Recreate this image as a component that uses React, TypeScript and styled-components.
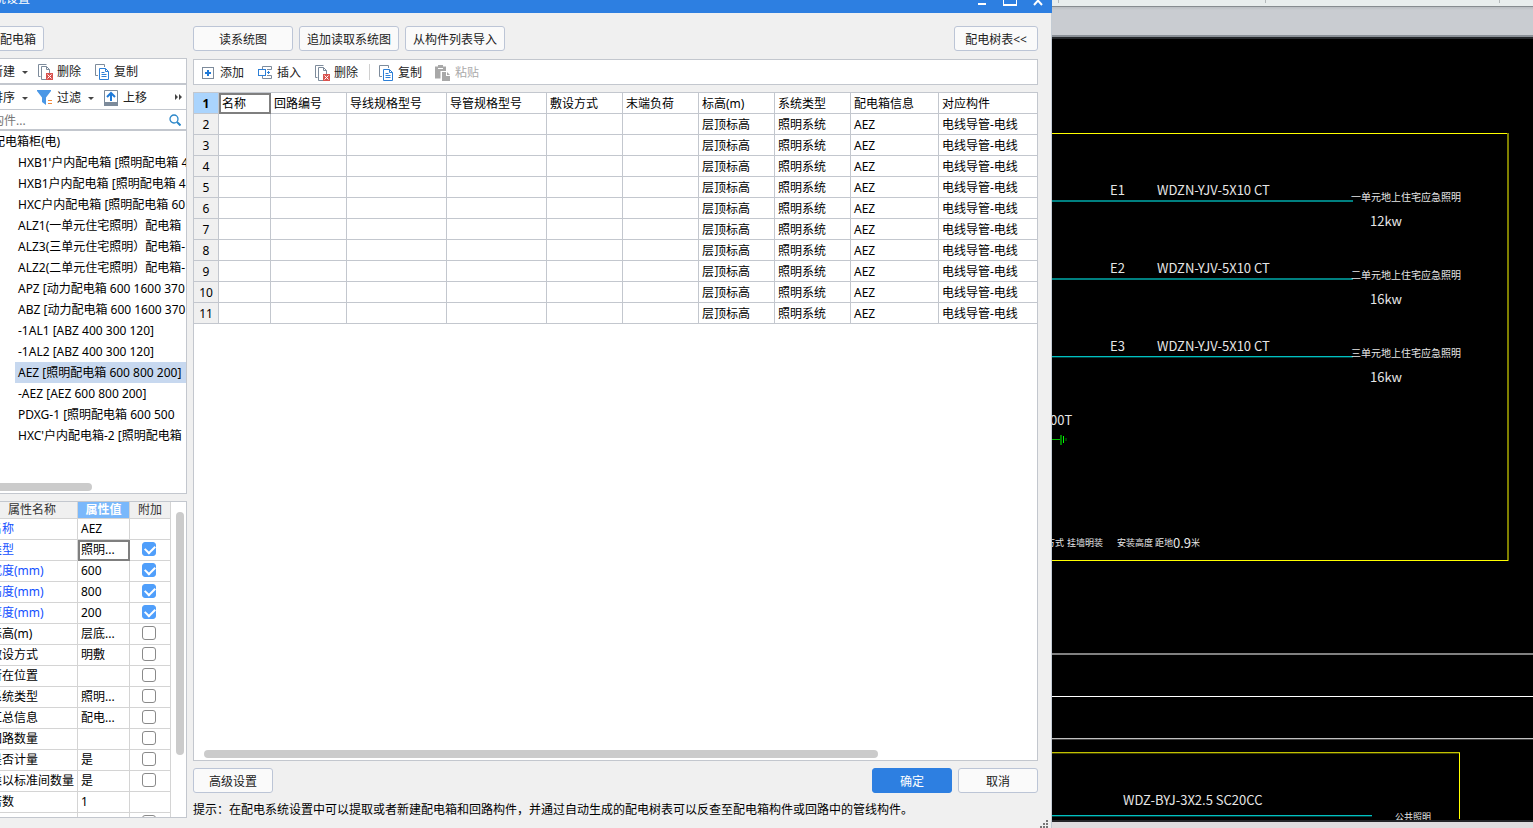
import React from "react";
import styled, { createGlobalStyle, css } from "styled-components";

const line = "#c3c7ce";
const blue = "#2d7fe1";

const GlobalStyle = createGlobalStyle`
  * { box-sizing: border-box; }
  body { margin: 0; overflow: hidden; }
  body, button, input, table {
    font-family: "Noto Sans", "Noto Sans CJK SC", sans-serif;
    font-size: 12px;
    line-height: 16px;
    color: #000;
  }
`;

const Screen = styled.div`
  display: grid;
  grid-template-columns: minmax(0, 1052fr) minmax(0, 481fr);
  grid-template-rows: minmax(0, 1fr);
  height: 100vh;
  overflow: hidden;
`;

/* The dialog is dragged partly past the top-left corner of the screen. */
const Dialog = styled.section`
  position: relative;
  display: flex;
  flex-direction: column;
  margin: -17px 0 0 -40px;
  background: #f0f0f0;
  border-right: 1px solid #c4ccd4;
`;

const TitleBar = styled.header`
  display: flex;
  align-items: center;
  justify-content: space-between;
  flex: none;
  height: 30px;
  padding: 2px 5px 0 34px;
  margin-right: -1px;
  background: ${blue};
  color: #fff;
`;

const WindowButtons = styled.div`
  display: flex;
  gap: 10px;
`;

const WindowButton = styled.button`
  display: flex;
  align-items: center;
  justify-content: center;
  width: 18px;
  height: 18px;
  padding: 0;
  border: 0;
  background: none;
`;

const Body = styled.div`
  display: flex;
  flex: 1;
  gap: 6px;
  min-height: 0;
  padding: 13px 13px 10px 0;
`;

const Sidebar = styled.aside`
  display: flex;
  flex-direction: column;
  flex: none;
  width: 227px;
`;

const Main = styled.main`
  display: flex;
  flex-direction: column;
  flex: 1;
  min-width: 0;
`;

const ActionRow = styled.div`
  display: flex;
  flex: none;
  gap: 6px;
`;

const Button = styled.button<{ $width: number; $primary?: boolean; $end?: boolean }>`
  width: ${(p) => p.$width}px;
  height: 25px;
  padding: 2px 0 0;
  border: 1px solid ${(p) => (p.$primary ? blue : "#bcc5d6")};
  border-radius: 3px;
  background: ${(p) => (p.$primary ? blue : "#fafafa")};
  color: ${(p) => (p.$primary ? "#fff" : "#222")};
  white-space: nowrap;
  ${(p) => p.$end && css`margin-left: auto;`}
`;

const EdgeButton = styled(Button)`
  padding-left: 32px;
`;

const Toolbar = styled.div<{ $inset: number; $top: number }>`
  display: flex;
  align-items: center;
  flex: none;
  gap: 1px;
  height: 26px;
  margin-top: ${(p) => p.$top}px;
  padding-left: ${(p) => p.$inset}px;
  border: 1px solid ${line};
  background: #fff;
`;

const Tool = styled.button<{ $menu?: boolean }>`
  display: flex;
  align-items: center;
  gap: 4px;
  height: 22px;
  padding: 2px ${(p) => (p.$menu ? 2 : 6)}px 0 6px;
  border: 0;
  border-radius: 3px;
  background: #fff;
  color: #222;
  white-space: nowrap;
  &:disabled { color: #aaa; }
  svg { flex: none; }
`;

const Caret = styled.span`
  margin-left: 3px;
  border: 3px solid transparent;
  border-top-color: #444;
  border-bottom-width: 0;
`;

const Divider = styled.span`
  width: 1px;
  height: 16px;
  margin: 0 1px 0 4px;
  background: #d0d0d0;
`;

const MoreButton = styled.button`
  display: flex;
  margin-left: auto;
  padding: 4px 3px;
  border: 0;
  background: none;
`;

const SearchBox = styled.label`
  display: flex;
  align-items: center;
  flex: none;
  height: 20px;
  padding: 0 5px 0 31px;
  border: 1px solid ${line};
  border-top: 0;
  background: #fff;
  input {
    flex: 1;
    min-width: 0;
    padding: 2px 0 0;
    border: 0;
    outline: 0;
    background: none;
  }
  input::placeholder { color: #777; }
`;

const TreePanel = styled.div`
  display: flex;
  flex-direction: column;
  flex: 1;
  min-height: 0;
  padding-bottom: 2px;
  border: 1px solid ${line};
  background: #fff;
  overflow: hidden;
`;

const Tree = styled.ul`
  flex: 1;
  min-height: 0;
  margin: 0;
  padding: 0 0 0 32px;
  list-style: none;
  line-height: 21px;
  white-space: nowrap;
  overflow: hidden;
  ul {
    margin: 0;
    padding: 0 0 0 22px;
    list-style: none;
  }
`;

const TreeItem = styled.li<{ $selected?: boolean }>`
  height: 21px;
  padding-left: 3px;
  overflow: hidden;
  background: ${(p) => (p.$selected ? "#c7d8ef" : "transparent")};
`;

const HScroll = styled.div<{ $from: number; $share: string }>`
  flex: none;
  width: ${(p) => p.$share};
  height: 8px;
  margin-left: ${(p) => p.$from}px;
  border-radius: 4px;
  background: #cbcbcb;
`;

const PropertyPanel = styled.div`
  display: flex;
  flex: none;
  height: 40%;
  margin-top: 7px;
  padding-left: 26px;
  border: 1px solid ${line};
  background: #fff;
  overflow: hidden;
`;

const VScroll = styled.div`
  width: 8px;
  height: 77%;
  margin: 10px 0 0 5px;
  border-radius: 4px;
  background: #cbcbcb;
`;

const PropertyTable = styled.table`
  flex: none;
  width: 184px;
  align-self: flex-start;
  table-layout: fixed;
  border-spacing: 0;
  th, td {
    padding: 0 3px;
    border-right: 1px solid #d4d4d4;
    border-bottom: 1px solid #d4d4d4;
    white-space: nowrap;
    text-align: left;
    font-weight: 400;
  }
  thead th {
    height: 17px;
    padding: 0;
    background: #f0f0f0;
    color: #333;
    text-align: center;
    line-height: 14px;
  }
  tbody th, tbody td { height: 21px; }
`;

const ActiveHead = styled.th`
  && {
    background: #7ab8fb;
    color: #fff;
    font-weight: 700;
  }
`;

const PropertyName = styled.th<{ $key?: boolean }>`
  color: ${(p) => (p.$key ? "#1450ff" : "#000")};
`;

const focusRing = css`
  outline: 2px solid #7f7f7f;
  outline-offset: -2px;
`;

const Cell = styled.td<{ $focused?: boolean }>`
  ${(p) => p.$focused && focusRing}
`;

const CheckCell = styled.td`
  && { padding: 0 0 3px 12px; }
`;

const CheckBox = styled.input`
  display: block;
  appearance: none;
  width: 14px;
  height: 14px;
  margin: 0;
  border: 1px solid #8a8a8a;
  border-radius: 3px;
  background: #fff;
  &:checked {
    border-color: #509ffb;
    background: #509ffb;
  }
  &:checked::after {
    content: "";
    display: block;
    width: 8px;
    height: 5px;
    margin: 2px 0 0 2px;
    border: solid #fff;
    border-width: 0 0 2px 2px;
    transform: rotate(-45deg);
  }
`;

const GridPanel = styled.div`
  display: flex;
  flex-direction: column;
  justify-content: space-between;
  flex: 1;
  min-height: 0;
  margin-top: 7px;
  padding-bottom: 2px;
  border: 1px solid ${line};
  background: #fff;
  overflow: hidden;
`;

const CircuitTable = styled.table`
  width: 100%;
  table-layout: fixed;
  border-spacing: 0;
  th, td {
    height: 21px;
    padding: 2px 3px 0;
    border-right: 1px solid ${line};
    border-bottom: 1px solid ${line};
    white-space: nowrap;
    overflow: hidden;
  }
  tr > :last-child { border-right: 0; }
`;

const RowHead = styled.th<{ $active?: boolean }>`
  && { padding: 2px 0 0; }
  background: ${(p) => (p.$active ? "#aad4fd" : "#f0f0f0")};
  font-weight: ${(p) => (p.$active ? 700 : 400)};
  text-align: center;
`;

const Footer = styled(ActionRow)`
  margin-top: 7px;
`;

const Hint = styled.p`
  flex: none;
  height: 17px;
  margin: 8px 0 0;
  line-height: 18px;
  white-space: nowrap;
`;

const Grip = styled.svg`
  position: absolute;
  right: 3px;
  bottom: 0;
`;

const CadPane = styled.section`
  display: flex;
  flex-direction: column;
  min-width: 0;
  background: #000;
`;

const Ribbon = styled.div`
  display: grid;
  grid-template-columns: 207fr 234fr 1px;
  flex: none;
  height: 6px;
  padding: 0 33px 3px 6px;
  background: #e8eded;
`;

const RibbonMark = styled.span`
  width: 1px;
  background: #b4b9bb;
`;

const TabStrip = styled.div`
  flex: none;
  height: 33px;
  border-top: 1px solid #868b8f;
  border-bottom: 2px solid #25282b;
  background: linear-gradient(#b9bdc1, #c9ccd1 3px, #c9ccd1 28px, #8a9097 28px);
`;

const Drawing = styled.svg`
  flex: 1;
  display: block;
  width: 100%;
  min-height: 0;
  background: #000;
  fill: none;
`;

const CadText = styled.text<{ $size: number }>`
  fill: #e6e6e6;
  font-family: "Noto Sans CJK SC", sans-serif;
  font-size: ${(p) => p.$size}px;
`;

const StatusStrip = styled.div`
  flex: none;
  height: 8px;
  border-top: 2px solid #232427;
  background: #dfdcde;
`;

/* Icons */

const AddIcon = () => (
  <svg width="16" height="16" viewBox="0 0 16 16" fill="none">
    <rect x="2.5" y="2.5" width="11" height="11" stroke="#7d8b9b" />
    <path d="M8 5v6M5 8h6" stroke="#1f7ad8" strokeWidth="2" />
  </svg>
);

const InsertIcon = () => (
  <svg width="16" height="16" viewBox="0 0 16 16" fill="none">
    <path d="M5.500 4.500v-3h9v3H10M5.500 10.500v3h9v-3H10" stroke="#7d8b9b" />
    <rect x="1.5" y="4.5" width="7" height="6" fill="#fff" stroke="#2d7fd6" />
    <path d="M11.500 6v3M10 7.500h3" stroke="#2d7fd6" />
  </svg>
);

const DeleteIcon = () => (
  <svg width="16" height="16" viewBox="0 0 16 16" fill="none">
    <path d="M3.500 12.500h-2v-12h8" stroke="#7d8b9b" />
    <path d="M9 15.500H4.500v-13h5l3 3V9" stroke="#7d8b9b" />
    <path d="M9.500 2.500v3h3" stroke="#7d8b9b" />
    <rect x="9" y="9" width="7" height="7" fill="#d9534f" />
    <path d="M10.500 10.500l4 4M14.500 10.500l-4 4" stroke="#fff" />
  </svg>
);

const CopyIcon = () => (
  <svg width="16" height="16" viewBox="0 0 16 16" fill="none">
    <path d="M4 11.500H1.500v-11h9V3" stroke="#7d8b9b" />
    <path d="M5.500 4.500h6l3 3v8h-9z" stroke="#2d7fd6" />
    <path d="M11.500 4.500v3h3M7.500 8.500h3M7.500 10.500h5M7.500 12.500h5" stroke="#2d7fd6" />
  </svg>
);

const PasteIcon = () => (
  <svg width="16" height="16" viewBox="0 0 16 16">
    <path d="M0 1.500h3V0h5v1.500h3V6H5.500v7.500H0z" fill="#a8a8a8" />
    <path d="M3 3.500h5" stroke="#fff" />
    <path d="M7 7h4v4h4v5H7z" fill="#a8a8a8" />
    <path d="M12 7l3 3h-3z" fill="#a8a8a8" />
  </svg>
);

const FilterIcon = () => (
  <svg width="16" height="16" viewBox="0 0 16 16">
    <path d="M0 0h14v1L9 7.500V15l-4-3V7.500L0 1z" fill="#4a97e6" />
    <path d="M11 10.500h4M11 13.500h4" stroke="#f0883a" />
  </svg>
);

const MoveUpIcon = () => (
  <svg width="16" height="16" viewBox="0 0 16 16" fill="none">
    <path d="M1.500 13V.5h13V13" stroke="#7d8b9b" />
    <rect x="1" y="12" width="14" height="4" fill="#7d8b9b" />
    <path d="M8 11V3M4 7l4-4 4 4" stroke="#1f7ad8" strokeWidth="2" />
  </svg>
);

const SearchIcon = () => (
  <svg width="12" height="12" viewBox="0 0 12 12" fill="none" stroke="#2a86c8">
    <circle cx="5" cy="5" r="4" strokeWidth="1.300" />
    <path d="M8 8l3.500 3.500" strokeWidth="2" />
  </svg>
);

const MoreIcon = () => (
  <svg width="8" height="6" viewBox="0 0 8 6" fill="#444">
    <path d="M0 0l3 3-3 3zM4 0l3 3-3 3z" />
  </svg>
);

const treeItems = [
  "HXB1'户内配电箱 [照明配电箱 4",
  "HXB1户内配电箱 [照明配电箱 4",
  "HXC户内配电箱 [照明配电箱 60",
  "ALZ1(一单元住宅照明）配电箱",
  "ALZ3(三单元住宅照明）配电箱-",
  "ALZ2(二单元住宅照明）配电箱-",
  "APZ [动力配电箱 600 1600 370",
  "ABZ [动力配电箱 600 1600 370",
  "-1AL1 [ABZ 400 300 120]",
  "-1AL2 [ABZ 400 300 120]",
  "AEZ [照明配电箱 600 800 200]",
  "-AEZ [AEZ 600 800 200]",
  "PDXG-1 [照明配电箱 600 500",
  "HXC'户内配电箱-2 [照明配电箱",
];

type Property = { name: string; value: string; extra?: boolean; key?: boolean };

const properties: Property[] = [
  { name: "名称", value: "AEZ", key: true },
  { name: "类型", value: "照明...", extra: true, key: true },
  { name: "宽度(mm)", value: "600", extra: true, key: true },
  { name: "高度(mm)", value: "800", extra: true, key: true },
  { name: "厚度(mm)", value: "200", extra: true, key: true },
  { name: "标高(m)", value: "层底...", extra: false },
  { name: "敷设方式", value: "明敷", extra: false },
  { name: "所在位置", value: "", extra: false },
  { name: "系统类型", value: "照明...", extra: false },
  { name: "汇总信息", value: "配电...", extra: false },
  { name: "回路数量", value: "", extra: false },
  { name: "是否计量", value: "是", extra: false },
  { name: "乘以标准间数量", value: "是", extra: false },
  { name: "倍数", value: "1" },
  { name: "", value: "", extra: false },
];

const columns = [
  { title: "名称", width: 52, value: "" },
  { title: "回路编号", width: 76, value: "" },
  { title: "导线规格型号", width: 100, value: "" },
  { title: "导管规格型号", width: 100, value: "" },
  { title: "敷设方式", width: 76, value: "" },
  { title: "末端负荷", width: 76, value: "" },
  { title: "标高(m)", width: 76, value: "层顶标高" },
  { title: "系统类型", width: 76, value: "照明系统" },
  { title: "配电箱信息", width: 88, value: "AEZ" },
  { title: "对应构件", width: undefined, value: "电线导管-电线" },
];

const circuits = [
  { id: "E1", y: 156, name: "一单元地上住宅应急照明", load: "12kw" },
  { id: "E2", y: 234, name: "二单元地上住宅应急照明", load: "16kw" },
  { id: "E3", y: 312, name: "三单元地上住宅应急照明", load: "16kw" },
];

const CadDrawing = () => (
  <Drawing>
    <path d="M0 94.500H456" stroke="#ff0" />
    <path d="M456 94V522" stroke="#808000" strokeWidth="2" />
    <path d="M0 521.500H456" stroke="#ff0" />
    <path d="M0 162H301M0 240H301" stroke="#008080" strokeWidth="2" />
    <path d="M0 317.500H301" stroke="#00c0c0" />
    <path d="M0 318.500H301" stroke="#004040" />
    {circuits.map((c) => (
      <g key={c.id}>
        <CadText $size={13} x={58} y={c.y}>{c.id}</CadText>
        <CadText $size={13} x={105} y={c.y}>WDZN-YJV-5X10 CT</CadText>
        <CadText $size={10} x={299} y={c.y + 6}>{c.name}</CadText>
        <CadText $size={13} x={318} y={c.y + 31}>{c.load}</CadText>
      </g>
    ))}
    <CadText $size={13} x={-2} y={386}>00T</CadText>
    <path d="M0 400.500H9" stroke="#00c000" />
    <path d="M9 396v10" stroke="#008000" strokeWidth="2" />
    <path d="M11.500 397v7" stroke="#0f0" />
    <path d="M14 399v3" stroke="#008000" />
    <CadText $size={9} x={-6} y={507}>方式</CadText>
    <CadText $size={9} x={15} y={507}>挂墙明装</CadText>
    <CadText $size={9} x={65} y={507}>安装高度</CadText>
    <CadText $size={9} x={103} y={507}>距地</CadText>
    <CadText $size={13} x={121} y={509}>0.9</CadText>
    <CadText $size={9} x={139} y={507}>米</CadText>
    <line x1="0" x2="100%" y1="615" y2="615" stroke="#808080" strokeWidth="2" />
    <line x1="0" x2="100%" y1="657.5" y2="657.5" stroke="#fff" />
    <line x1="0" x2="100%" y1="699.5" y2="699.5" stroke="#c0c0c0" />
    <line x1="0" x2="100%" y1="700.5" y2="700.5" stroke="#404040" />
    <path d="M0 713.500H408" stroke="#c0c000" />
    <path d="M0 714.500H407" stroke="#404000" />
    <path d="M407.500 714V780" stroke="#ff0" />
    <CadText $size={13} x={71} y={766}>WDZ-BYJ-3X2.5 SC20CC</CadText>
    <path d="M0 776.500H320" stroke="#00c0c0" />
    <path d="M0 777.500H320" stroke="#004040" />
    <CadText $size={9} x={343} y={781}>公共照明</CadText>
  </Drawing>
);

export default function App() {
  return (
    <Screen>
      <GlobalStyle />
      <Dialog>
        <TitleBar>
          <span>统设置</span>
          <WindowButtons>
            <WindowButton aria-label="最小化">
              <svg width="14" height="14" stroke="#fff" strokeWidth="2"><path d="M3 12h8" /></svg>
            </WindowButton>
            <WindowButton aria-label="最大化">
              <svg width="14" height="14" stroke="#fff" fill="none">
                <path d="M.5 0v13M13.500 0v13" /><path d="M0 13h14" strokeWidth="2" />
              </svg>
            </WindowButton>
            <WindowButton aria-label="关闭">
              <svg width="14" height="14" stroke="#fff" strokeWidth="2"><path d="M3 4l8 9M11 4l-8 9" /></svg>
            </WindowButton>
          </WindowButtons>
        </TitleBar>
        <Body>
          <Sidebar>
            <ActionRow>
              <EdgeButton $width={84}>配电箱</EdgeButton>
            </ActionRow>
            <Toolbar $inset={4} $top={7}>
              <Tool $menu><AddIcon />新建<Caret /></Tool>
              <Tool><DeleteIcon />删除</Tool>
              <Tool><CopyIcon />复制</Tool>
            </Toolbar>
            <Toolbar $inset={4} $top={0}>
              <Tool $menu><InsertIcon />排序<Caret /></Tool>
              <Tool $menu><FilterIcon />过滤<Caret /></Tool>
              <Tool><MoveUpIcon />上移</Tool>
              <MoreButton aria-label="更多"><MoreIcon /></MoreButton>
            </Toolbar>
            <SearchBox>
              <input aria-label="构件" placeholder="构件..." />
              <SearchIcon />
            </SearchBox>
            <TreePanel>
              <Tree>
                <li>
                  配电箱柜(电)
                  <ul>
                    {treeItems.map((t) => (
                      <TreeItem key={t} $selected={t.startsWith("AEZ")}>{t}</TreeItem>
                    ))}
                  </ul>
                </li>
              </Tree>
              <HScroll $from={30} $share="45%" />
            </TreePanel>
            <PropertyPanel>
              <PropertyTable>
                <colgroup>
                  <col width="91" />
                  <col width="52" />
                  <col width="41" />
                </colgroup>
                <thead>
                  <tr>
                    <th>属性名称</th>
                    <ActiveHead>属性值</ActiveHead>
                    <th>附加</th>
                  </tr>
                </thead>
                <tbody>
                  {properties.map((p, i) => (
                    <tr key={i}>
                      <PropertyName $key={p.key}>{p.name}</PropertyName>
                      <Cell $focused={i === 1}>{p.value}</Cell>
                      <CheckCell>
                        {p.extra !== undefined && (
                          <CheckBox type="checkbox" aria-label={`${p.name}附加`} defaultChecked={p.extra} />
                        )}
                      </CheckCell>
                    </tr>
                  ))}
                </tbody>
              </PropertyTable>
              <VScroll />
            </PropertyPanel>
          </Sidebar>
          <Main>
            <ActionRow>
              <Button $width={100}>读系统图</Button>
              <Button $width={100}>追加读取系统图</Button>
              <Button $width={100}>从构件列表导入</Button>
              <Button $width={84} $end>配电树表&lt;&lt;</Button>
            </ActionRow>
            <Toolbar $inset={0} $top={8}>
              <Tool><AddIcon />添加</Tool>
              <Tool><InsertIcon />插入</Tool>
              <Tool><DeleteIcon />删除</Tool>
              <Divider />
              <Tool><CopyIcon />复制</Tool>
              <Tool disabled><PasteIcon />粘贴</Tool>
            </Toolbar>
            <GridPanel>
              <CircuitTable>
                <colgroup>
                  <col width="25" />
                  {columns.map((c) => (
                    <col key={c.title} width={c.width} />
                  ))}
                </colgroup>
                <tbody>
                  <tr>
                    <RowHead $active>1</RowHead>
                    {columns.map((c, i) => (
                      <Cell key={c.title} $focused={i === 0}>{c.title}</Cell>
                    ))}
                  </tr>
                  {Array.from({ length: 10 }, (_, r) => (
                    <tr key={r}>
                      <RowHead>{r + 2}</RowHead>
                      {columns.map((c) => (
                        <Cell key={c.title}>{c.value}</Cell>
                      ))}
                    </tr>
                  ))}
                </tbody>
              </CircuitTable>
              <HScroll $from={10} $share="80%" />
            </GridPanel>
            <Footer>
              <Button $width={80}>高级设置</Button>
              <Button $width={80} $primary $end>确定</Button>
              <Button $width={80}>取消</Button>
            </Footer>
            <Hint>
              提示：在配电系统设置中可以提取或者新建配电箱和回路构件，并通过自动生成的配电树表可以反查至配电箱构件或回路中的管线构件。
            </Hint>
          </Main>
        </Body>
        <Grip width="8" height="8" viewBox="0 0 8 8" fill="#777">
          <path d="M6 0h2v2H6zM3 3h2v2H3zM6 3h2v2H6zM0 6h2v2H0zM3 6h2v2H3zM6 6h2v2H6z" />
        </Grip>
      </Dialog>
      <CadPane>
        <Ribbon>
          <RibbonMark />
          <RibbonMark />
          <RibbonMark />
        </Ribbon>
        <TabStrip />
        <CadDrawing />
        <StatusStrip />
      </CadPane>
    </Screen>
  );
}
